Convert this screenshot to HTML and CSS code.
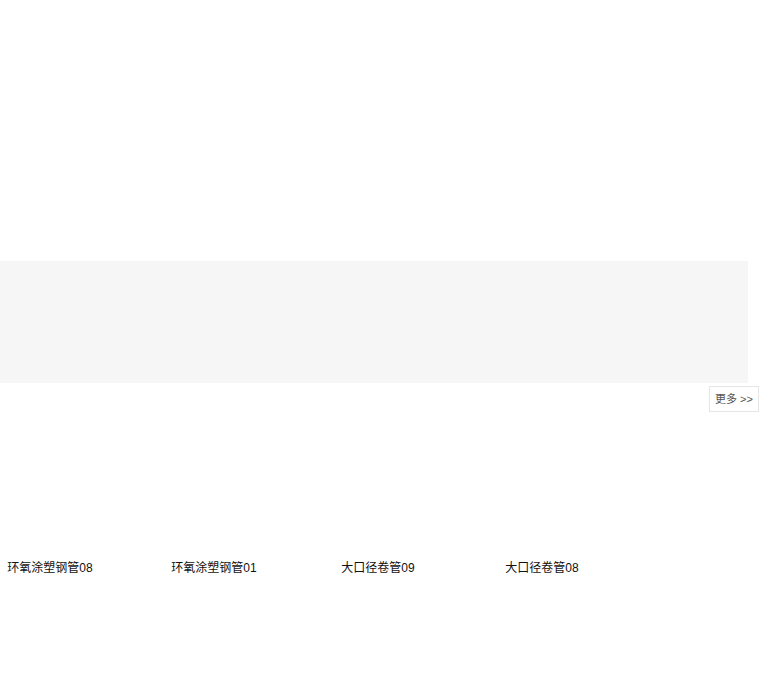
FILE: index.html
```html
<!DOCTYPE html>
<html>
<head>
    <meta charset="UTF-8">
    <meta name="viewport" content="width=device-width, initial-scale=1.0">
    <title>产品展示</title>
    <link rel="stylesheet" href="styles.css">
</head>
<body>
    <div class="top"></div>

    <div class="banner"></div>

    <div class="moreRow">
        <a class="more" href="#">更多 &gt;&gt;</a>
    </div>

    <div class="products">
        <div class="item"><span class="thumb"></span><p class="name">环氧涂塑钢管08</p></div>
        <div class="item"><span class="thumb"></span><p class="name">环氧涂塑钢管01</p></div>
        <div class="item"><span class="thumb"></span><p class="name">大口径卷管09</p></div>
        <div class="item"><span class="thumb"></span><p class="name">大口径卷管08</p></div>
    </div>
</body>
</html>
```

FILE: styles.css
```css
body {
    margin: 0;
    padding: 0;
    background-color: #fff;
    font-family: "Liberation Sans", "Noto Sans CJK SC", sans-serif;
    font-size: 12px;
    color: #111;
}

.top {
    height: 261px;
}

.banner {
    width: 748px;
    height: 122px;
    background-color: #f6f6f6;
}

.moreRow {
    display: flex;
    justify-content: flex-end;
    padding: 3px 21px 0 0;
}

.more {
    display: block;
    width: 48px;
    height: 24px;
    line-height: 24px;
    border: 1px solid #e6e6e6;
    text-align: center;
    font-size: 11px;
    color: #555;
    text-decoration: none;
}

.products {
    display: grid;
    grid-template-columns: repeat(4, 100px);
    column-gap: 64px;
    padding-top: 148px;
}

.item {
    display: flex;
    flex-direction: column;
    align-items: center;
}

.thumb {
    display: block;
    height: 0;
}

.name {
    margin: 0;
    white-space: nowrap;
    line-height: 16px;
}
```
